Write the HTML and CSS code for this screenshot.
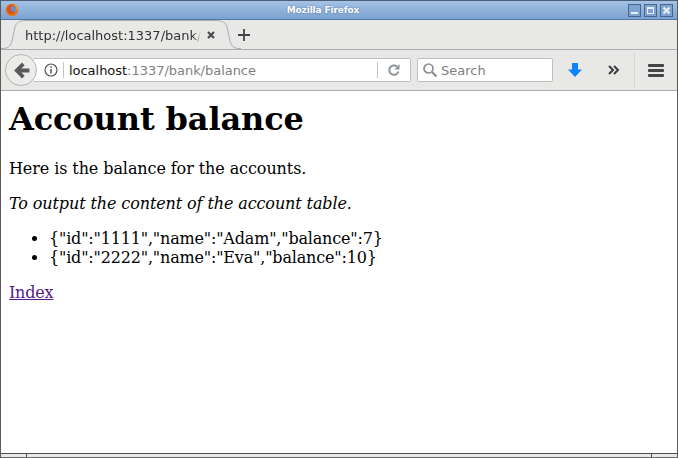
FILE: index.html
```html
<!DOCTYPE html>
<html lang="en">
<head>
  <meta charset="UTF-8">
  <title>Mozilla Firefox</title>
  <link rel="stylesheet" href="styles.css">
</head>
<body>
  <div class="window">
    <div class="titlebar">
      <svg class="ff-logo" width="14" height="14" viewBox="0 0 18 18">
        <circle cx="9" cy="9" r="8" fill="#e8761c"/>
        <circle cx="10" cy="8" r="4.200" fill="#6a8fc0"/>
        <path d="M3 5 C5 2 9 1 12 2 C9 3 8 4 7.500 6 C7 9 9 12 13 11.500 C12 14 9 15 6.500 14 C3 13 1.500 9 3 5Z" fill="#d9531e"/>
        <path d="M13 2.500 C15.500 4 16.500 7 16 10 C15 8 14 5 13 2.500Z" fill="#f2b632"/>
      </svg>
      <span class="title-text">Mozilla Firefox</span>
      <div class="win-buttons">
        <span class="win-btn"><i class="glyph-min"></i></span>
        <span class="win-btn"><i class="glyph-max"></i></span>
        <span class="win-btn">
          <svg width="9" height="9" viewBox="0 0 9 9"><path d="M1.500 1.500 L7.500 7.500 M7.500 1.500 L1.500 7.500" stroke="#e6edf6" stroke-width="2.400"/></svg>
        </span>
      </div>
    </div>

    <div class="tabbar">
      <div class="tab">
        <svg class="tab-shape" width="240" height="30" viewBox="0 0 240 30">
          <path d="M0 29.500 H2 C8 29.500 10 26 11 22 L14 8 C15 4 19 1.500 24 1.500 H216 C221 1.500 225 4 226 8 L229 22 C230 26 232 29.500 238 29.500 H240" fill="#e8e8e7" stroke="#a9adb0"/>
        </svg>
        <span class="tab-label">http://localhost:1337/bank/balance</span>
        <svg class="tab-close" width="10" height="10" viewBox="0 0 10 10"><path d="M2 2 L8 8 M8 2 L2 8" stroke="#4a4a4a" stroke-width="2.200"/></svg>
      </div>
      <svg class="new-tab" width="14" height="14" viewBox="0 0 14 14"><path d="M7 1 V13 M1 7 H13" stroke="#444" stroke-width="1.800"/></svg>
    </div>

    <div class="navbar">
      <div class="back-btn">
        <svg width="19" height="19" viewBox="0 0 18 18"><path d="M9.500 1.500 L2 9 L9.500 16.500 L12 14 L9 11 H16.500 V7 H9 L12 4 Z" fill="#5a5a5a"/></svg>
      </div>
      <div class="urlbar">
        <svg class="info-icon" width="14" height="14" viewBox="0 0 14 14">
          <circle cx="7" cy="7" r="6" fill="none" stroke="#555" stroke-width="1.200"/>
          <rect x="6.300" y="6" width="1.500" height="4.500" fill="#555"/>
          <rect x="6.300" y="3.300" width="1.500" height="1.600" fill="#555"/>
        </svg>
        <span class="url-sep"></span>
        <span class="url-text">localhost<span class="url-dim">:1337/bank/balance</span></span>
        <span class="url-sep reload-sep"></span>
        <svg class="reload" width="14" height="14" viewBox="0 0 14 14">
          <path d="M11.500 8.500 A4.700 4.700 0 1 1 10 3.500" fill="none" stroke="#8d959c" stroke-width="2"/>
          <path d="M12.500 1 V6.500 H7.500 Z" fill="#8d959c"/>
        </svg>
      </div>
      <div class="searchbar">
        <svg width="16" height="16" viewBox="0 0 16 16">
          <circle cx="6.500" cy="6.500" r="4.500" fill="none" stroke="#8b8f93" stroke-width="1.700"/>
          <path d="M10 10 L14.500 14.500" stroke="#8b8f93" stroke-width="2.200"/>
        </svg>
        <span class="search-text">Search</span>
      </div>
      <svg class="tool-download" width="16" height="16" viewBox="0 0 16 16"><path d="M5 1 H11 V7.500 H15 L8 15 L1 7.500 H5 Z" fill="#0a84ff"/></svg>
      <svg class="tool-more" width="12" height="10" viewBox="0 0 12 10"><path d="M1 1 L5 5 L1 9 M6 1 L10 5 L6 9" fill="none" stroke="#3c3c3c" stroke-width="2"/></svg>
      <span class="tool-sep"></span>
      <div class="tool-menu"><i></i><i></i><i></i></div>
    </div>

    <div class="content">
      <h1>Account balance</h1>
      <p>Here is the balance for the accounts.</p>
      <p><em>To output the content of the account table.</em></p>
      <ul>
        <li>{"id":"1111","name":"Adam","balance":7}</li>
        <li>{"id":"2222","name":"Eva","balance":10}</li>
      </ul>
      <p><a href="#">Index</a></p>
    </div>

    <div class="bottom-frame">
      <span class="grip-left"></span>
      <span class="grip-mid"></span>
      <span class="grip-right"></span>
    </div>
  </div>
</body>
</html>
```

FILE: styles.css
```css
html, body {
  margin: 0;
  padding: 0;
  height: 100%;
  overflow: hidden;
}
.window {
  display: flex;
  flex-direction: column;
  width: 678px;
  height: 458px;
  box-sizing: border-box;
  border-left: 1px solid #5a5a5a;
  border-right: 1px solid #5a5a5a;
  background-color: #fff;
  overflow: hidden;
}

/* title bar */
.titlebar {
  position: relative;
  display: flex;
  align-items: center;
  height: 20px;
  flex: none;
  box-sizing: border-box;
  border-top: 1px solid #4c5f78;
  border-bottom: 1px solid #4f78ab;
  background: linear-gradient(#a4c2e4, #7ca2d0);
}
.ff-logo {
  margin-left: 4px;
}
.title-text {
  position: absolute;
  left: 0;
  right: 32px;
  text-align: center;
  font: bold 9px "DejaVu Sans", sans-serif;
  letter-spacing: -0.13px;
  color: #fff;
  text-shadow: 0 0 2px #4f6f9a;
}
.win-buttons {
  display: flex;
  gap: 3px;
  margin-left: auto;
  margin-right: 4px;
}
.win-btn {
  display: flex;
  align-items: center;
  justify-content: center;
  width: 11px;
  height: 11px;
  border: 1px solid #47658e;
  background-color: #7ea3cf;
}
.glyph-min {
  width: 7px;
  height: 2px;
  margin-top: 5px;
  background-color: #e6edf6;
}
.glyph-max {
  width: 5px;
  height: 4px;
  border: 1px solid #e6edf6;
  border-top-width: 2px;
}

/* tabs */
.tabbar {
  display: flex;
  align-items: center;
  height: 30px;
  flex: none;
  box-sizing: border-box;
  background-color: #e8e8e7;
  border-bottom: 1px solid #a9adb0;
}
.tab {
  position: relative;
  display: flex;
  align-items: center;
  width: 232px;
  height: 30px;
  flex: none;
  margin-top: 1px;
}
.tab-shape {
  position: absolute;
  left: 0;
  top: -1px;
}
.tab-label {
  position: relative;
  width: 176px;
  margin-left: 24px;
  overflow: hidden;
  white-space: nowrap;
  font: 13px "DejaVu Sans", sans-serif;
  color: #333;
  -webkit-mask-image: linear-gradient(to right, #000 168px, transparent 176px);
}
.tab-close {
  position: relative;
  margin-left: 5px;
}
.new-tab {
  position: relative;
  margin-left: 4px;
}

/* nav bar */
.navbar {
  display: flex;
  align-items: center;
  height: 41px;
  flex: none;
  box-sizing: border-box;
  background-color: #e8e8e7;
  border-bottom: 1px solid #a9adb0;
}
.back-btn {
  position: relative;
  z-index: 1;
  display: flex;
  align-items: center;
  justify-content: center;
  width: 30px;
  height: 30px;
  flex: none;
  margin-left: 4px;
  border: 1px solid #b5b5b5;
  border-radius: 50%;
  background-color: #ececeb;
}
.urlbar {
  display: flex;
  align-items: center;
  width: 377px;
  height: 24px;
  flex: none;
  box-sizing: border-box;
  margin-left: -3px;
  padding-left: 9px;
  border: 1px solid #bfbfbf;
  border-left: none;
  border-radius: 0 2px 2px 0;
  background-color: #fff;
}
.info-icon {
  margin-left: 1px;
}
.url-sep {
  width: 1px;
  height: 16px;
  margin-left: 5px;
  background-color: #c4c4c4;
}
.url-text {
  margin-left: 5px;
  font: 13px "DejaVu Sans", sans-serif;
  letter-spacing: -0.03px;
  color: #111;
  white-space: nowrap;
}
.url-dim {
  color: #808080;
}
.reload-sep {
  margin-left: auto;
}
.reload {
  margin: 0 9px;
}
.searchbar {
  display: flex;
  align-items: center;
  width: 136px;
  height: 24px;
  flex: none;
  box-sizing: border-box;
  margin-left: 6px;
  padding-left: 4px;
  border: 1px solid #bfbfbf;
  border-radius: 2px;
  background-color: #fff;
}
.search-text {
  margin-left: 3px;
  font: 13px "DejaVu Sans", sans-serif;
  color: #808080;
}
.tool-download {
  margin-left: 14px;
}
.tool-more {
  margin-left: 25px;
}
.tool-sep {
  width: 1px;
  height: 35px;
  margin-left: 14px;
  background-color: #d6d6d6;
}
.tool-menu {
  display: flex;
  flex-direction: column;
  gap: 2px;
  margin-left: 13px;
}
.tool-menu i {
  display: block;
  width: 16px;
  height: 3px;
  border-radius: 1px;
  background-color: #444;
}

/* page content */
.content {
  flex: 1;
  padding: 8px;
  overflow: hidden;
  font: 16px/19px "DejaVu Serif", serif;
  letter-spacing: -0.09px;
  color: #000;
}
h1 {
  margin: 2px 0 21px;
  font-size: 32px;
  font-weight: bold;
  line-height: 37px;
  letter-spacing: -0.13px;
}
p {
  margin: 16px 0;
}
em {
  letter-spacing: -0.11px;
}
ul {
  margin: 16px 0;
  padding-left: 40px;
  letter-spacing: -0.18px;
}
a {
  color: #551a8b;
  letter-spacing: -0.2px;
}

/* bottom window frame */
.bottom-frame {
  display: flex;
  height: 5px;
  flex: none;
  box-sizing: border-box;
  border-top: 1px solid #4a4a4a;
  border-bottom: 1px solid #6a6a6a;
  background-color: #e8e8e8;
}
.grip-left {
  width: 25px;
  border-right: 1px solid #4a4a4a;
}
.grip-mid {
  flex: 1;
}
.grip-right {
  width: 25px;
  border-left: 1px solid #4a4a4a;
}
```
